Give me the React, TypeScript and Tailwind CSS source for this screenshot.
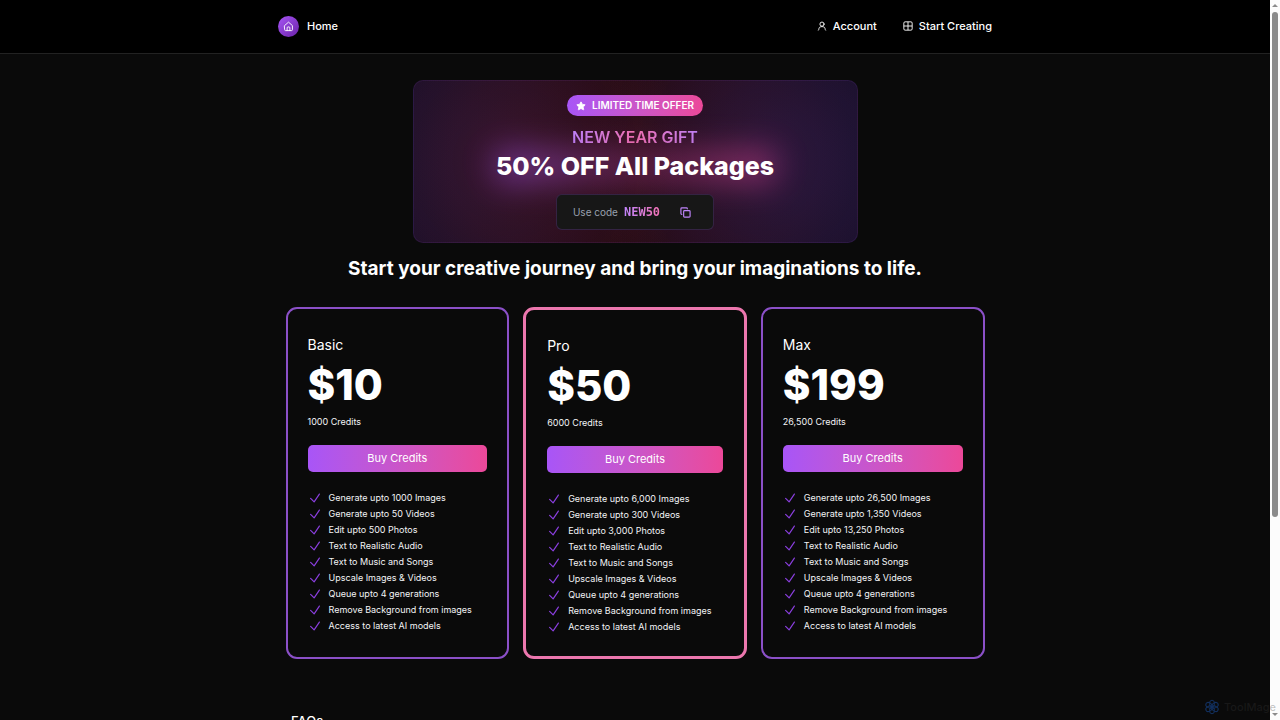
import type { ReactNode } from "react"
import { Copy, Star } from "lucide-react"

const extras = [
  "Text to Realistic Audio",
  "Text to Music and Songs",
  "Upscale Images & Videos",
  "Queue upto 4 generations",
  "Remove Background from images",
  "Access to latest AI models",
]

const plans = [
  {
    name: "Basic",
    price: "$10",
    credits: "1000 Credits",
    featured: false,
    features: ["Generate upto 1000 Images", "Generate upto 50 Videos", "Edit upto 500 Photos", ...extras],
  },
  {
    name: "Pro",
    price: "$50",
    credits: "6000 Credits",
    featured: true,
    features: ["Generate upto 6,000 Images", "Generate upto 300 Videos", "Edit upto 3,000 Photos", ...extras],
  },
  {
    name: "Max",
    price: "$199",
    credits: "26,500 Credits",
    featured: false,
    features: ["Generate upto 26,500 Images", "Generate upto 1,350 Videos", "Edit upto 13,250 Photos", ...extras],
  },
]

function NavLink({ icon, children }: { icon: ReactNode; children: ReactNode }) {
  return (
    <a href="#" className="flex items-center gap-[6px] text-[11px] leading-4 font-medium text-white">
      {icon}
      {children}
    </a>
  )
}

function Header() {
  return (
    <header className="border-b border-[#222] bg-black">
      <div className="mx-auto flex h-[53px] max-w-[714px] items-center justify-between pb-px">
        <a href="#" className="flex items-center gap-2 text-[11px] leading-4 font-medium text-white">
          <span className="flex size-[21px] items-center justify-center rounded-full bg-linear-to-br from-[#a855f7] to-[#6b21a8]">
            <svg viewBox="0 0 24 24" className="size-[11px]" fill="none" stroke="currentColor" strokeWidth="2" strokeLinecap="round" strokeLinejoin="round">
              <path d="M3.500 10 12 2.500l8.500 7.500V19a2 2 0 0 1-2 2h-13a2 2 0 0 1-2-2z" />
              <path d="M9 21v-6a2 2 0 0 1 2-2h2a2 2 0 0 1 2 2v6" />
            </svg>
          </span>
          Home
        </a>
        <nav className="flex items-center gap-[26px]">
          <NavLink
            icon={
              <svg viewBox="0 0 24 24" className="size-[10px]" fill="none" stroke="currentColor" strokeWidth="2.2" strokeLinecap="round">
                <circle cx="12" cy="7.500" r="5" />
                <path d="M3.500 22c.8-1 1-2.500 1.200-4 .3-2.800 2.800-4.500 7.300-4.500s7 1.700 7.300 4.500c.2 1.500.4 3 1.200 4" />
              </svg>
            }
          >
            Account
          </NavLink>
          <NavLink
            icon={
              <svg viewBox="0 0 24 24" className="size-[10px]" fill="none" stroke="currentColor" strokeWidth="2.2">
                <rect x="2" y="2" width="20" height="20" rx="3" />
                <path d="M12 2v20M2 12h20" />
              </svg>
            }
          >
            Start Creating
          </NavLink>
        </nav>
      </div>
    </header>
  )
}

function Banner() {
  return (
    <section className="mx-auto flex h-[163px] max-w-[445px] flex-col items-center rounded-[10px] border border-[#a855f7]/10 bg-[radial-gradient(circle_at_20%_50%,rgba(236,72,153,0.15),transparent_50%),radial-gradient(circle_at_80%_50%,rgba(168,85,247,0.15),transparent_50%),linear-gradient(90deg,#150e24,#240a10_50%,#150e24)] pt-[14px]">
      <span className="flex h-[21px] items-center gap-[6px] rounded-full bg-linear-to-r from-[#a855f7] to-[#ec4899] px-[9px] text-[10px] font-semibold text-white">
        <Star className="size-[10px] fill-current" />
        LIMITED TIME OFFER
      </span>
      <h2 className="mt-[10px] bg-linear-to-r from-[#c084fc] via-[#f472b6] to-[#c084fc] bg-clip-text text-[16px] leading-[22px] font-semibold text-transparent">
        NEW YEAR GIFT
      </h2>
      <div className="relative mt-[2px]">
        <div className="absolute inset-0 bg-linear-to-r from-[#a855f7] via-[#8a2f6c] to-[#ec4899] opacity-50 blur-lg" />
        <p className="relative text-[25px] leading-8 font-extrabold text-white">50% OFF All Packages</p>
      </div>
      <div className="relative mt-3 flex h-9 items-center rounded-md border border-[#a855f7]/20 bg-[#171717] px-4">
        <span className="text-[10px] text-gray-400">Use code</span>
        <code className="ml-[6px] bg-linear-to-r from-[#c084fc] to-[#f472b6] bg-clip-text font-['DejaVu_Sans_Mono',monospace] text-[12px] font-bold text-transparent">
          NEW50
        </code>
        <button type="button" aria-label="Copy code" className="mr-[6px] ml-5 text-[#c084fc]">
          <Copy className="size-[11px]" strokeWidth={2.5} />
        </button>
      </div>
    </section>
  )
}

function PlanCard({ plan }: { plan: (typeof plans)[number] }) {
  return (
    <article
      className={
        plan.featured
          ? "rounded-[11px] border-3 border-[#ec77ae] px-[21px] pt-[26px] pb-[21px]"
          : "rounded-[11px] border-2 border-[#8b50c8] px-5 pt-[26px] pb-[22px]"
      }
    >
      <h3 className="text-[14px] leading-5 text-white">{plan.name}</h3>
      <p className="mt-1 text-[42px] leading-[52px] font-extrabold text-white">{plan.price}</p>
      <p className="mt-[3px] text-[9px] leading-4 text-gray-100">{plan.credits}</p>
      <button
        type="button"
        className="mt-[15px] h-[27px] w-full rounded-[5px] bg-linear-to-r from-[#a855f7] to-[#ec4899] text-[11px] text-white"
      >
        Buy Credits
      </button>
      <ul className="mt-[18px]">
        {plan.features.map((feature) => (
          <li key={feature} className="flex items-center gap-[7px] text-[9px] leading-4 text-gray-100">
            <svg viewBox="0 0 24 24" className="size-[14px] text-[#8b3fe0]" fill="none" stroke="currentColor" strokeWidth="2" strokeLinecap="round" strokeLinejoin="round">
              <path d="m4.500 12.750 6 6 9-13.500" />
            </svg>
            {feature}
          </li>
        ))}
      </ul>
    </article>
  )
}

function Scrollbar() {
  return (
    <div className="flex w-[10px] shrink-0 flex-col items-center justify-between bg-[#fcfcfc] py-1">
      <svg viewBox="0 0 6 3" className="h-[3px] w-[6px]" fill="#8b8b8b">
        <path d="M0 3 3 0l3 3z" />
      </svg>
      <div className="mt-[5px] w-[6px] flex-1">
        <div className="h-[72%] rounded-full bg-[#8b8b8b]" />
      </div>
      <svg viewBox="0 0 6 3" className="h-[3px] w-[6px]" fill="#8b8b8b">
        <path d="M0 0h6L3 3z" />
      </svg>
    </div>
  )
}

function Watermark() {
  return (
    <div className="absolute right-1 bottom-[5px] flex items-center gap-1 text-[11px] leading-4 font-medium text-[#3c3c3c]/30">
      <svg viewBox="0 0 16 16" className="size-4" fill="none" stroke="#12305f" strokeWidth="1">
        {[0, 60, 120, 180, 240, 300].map((angle) => (
          <ellipse key={angle} cx="8" cy="4.500" rx="2.500" ry="3.300" transform={`rotate(${angle} 8 8)`} />
        ))}
      </svg>
      ToolMage
    </div>
  )
}

export default function App() {
  return (
    <div className="relative flex h-screen overflow-hidden bg-[#0a0a0a] font-['Inter',sans-serif]">
      <div className="min-w-0 flex-1">
        <Header />
        <main className="px-4 pt-[26px]">
          <Banner />
          <h1 className="mt-3 text-center text-[19px] leading-7 font-bold text-white">
            Start your creative journey and bring your imaginations to life.
          </h1>
          <div className="mx-auto mt-6 grid max-w-[699px] grid-cols-3 gap-[14px]">
            {plans.map((plan) => (
              <PlanCard key={plan.name} plan={plan} />
            ))}
          </div>
          <section className="mx-auto mt-[52px] max-w-[688px]">
            <h2 className="text-[13px] leading-5 font-medium text-white">FAQs</h2>
          </section>
        </main>
      </div>
      <Scrollbar />
      <Watermark />
    </div>
  )
}
